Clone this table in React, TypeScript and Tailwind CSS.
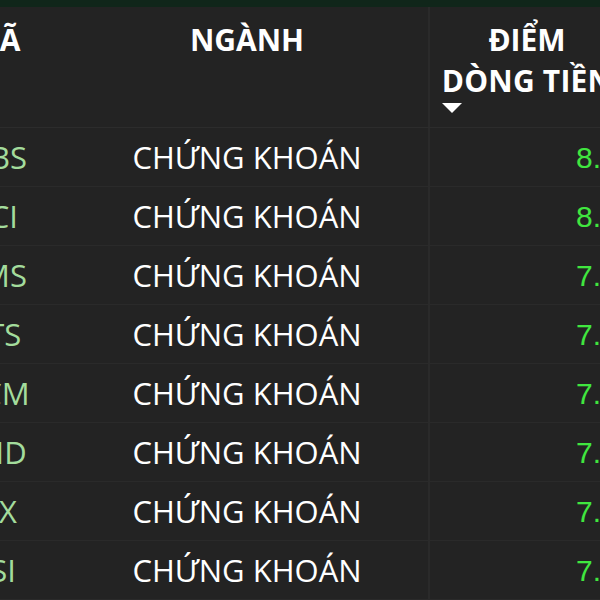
import React from "react";

const ROWS = [
    { code: "MBS", sector: "CHỨNG KHOÁN", score: "8.21" },
    { code: "VCI", sector: "CHỨNG KHOÁN", score: "8.04" },
    { code: "BMS", sector: "CHỨNG KHOÁN", score: "7.95" },
    { code: "CTS", sector: "CHỨNG KHOÁN", score: "7.88" },
    { code: "HCM", sector: "CHỨNG KHOÁN", score: "7.76" },
    { code: "VND", sector: "CHỨNG KHOÁN", score: "7.65" },
    { code: "VIX", sector: "CHỨNG KHOÁN", score: "7.52" },
    { code: "SSI", sector: "CHỨNG KHOÁN", score: "7.41" },
];

const App = () => {
    return (
        <div className="w-[600px] h-[600px] overflow-hidden bg-[#232323] font-['Open_Sans',sans-serif]">
            <div className="h-[7px] bg-[#10261a]"></div>
            <div className="ml-[-70px] w-[700px]">
                {/* Header */}
                <div className="grid grid-cols-[136px_362px_202px] h-[121px] border-b border-[#2c2c2c] text-white font-bold text-[30px] leading-[40px]">
                    <div className="text-center pt-[13px] pr-[4px]">MÃ</div>
                    <div className="text-center pt-[13px]">NGÀNH</div>
                    <div className="border-l-2 border-[#2a2a2a] pt-[13px] pr-[6px] flex flex-col items-center">
                        <div>ĐIỂM</div>
                        <div className="relative mt-[1px] tracking-[0.2px]">
                            DÒNG TIỀN
                            <span className="absolute left-0 top-[42px] w-0 h-0 border-l-[10px] border-r-[10px] border-t-[10px] border-l-transparent border-r-transparent border-t-white"></span>
                        </div>
                    </div>
                </div>
                {/* Rows */}
                {ROWS.map((r) => (
                    <div key={r.code} className="grid grid-cols-[136px_362px_202px] h-[59px] border-b border-[#2a2a2a] items-center text-[31px]">
                        <div className="text-center pr-[7px] text-[#a3dc9c]">{r.code}</div>
                        <div className="text-center text-white">{r.sector}</div>
                        <div className="h-full border-l-2 border-[#2a2a2a] flex items-center pl-[146px] text-[#40e63f] font-['Liberation_Sans',sans-serif] text-[30px]">
                            {r.score}
                        </div>
                    </div>
                ))}
            </div>
        </div>
    );
};

export default App;
